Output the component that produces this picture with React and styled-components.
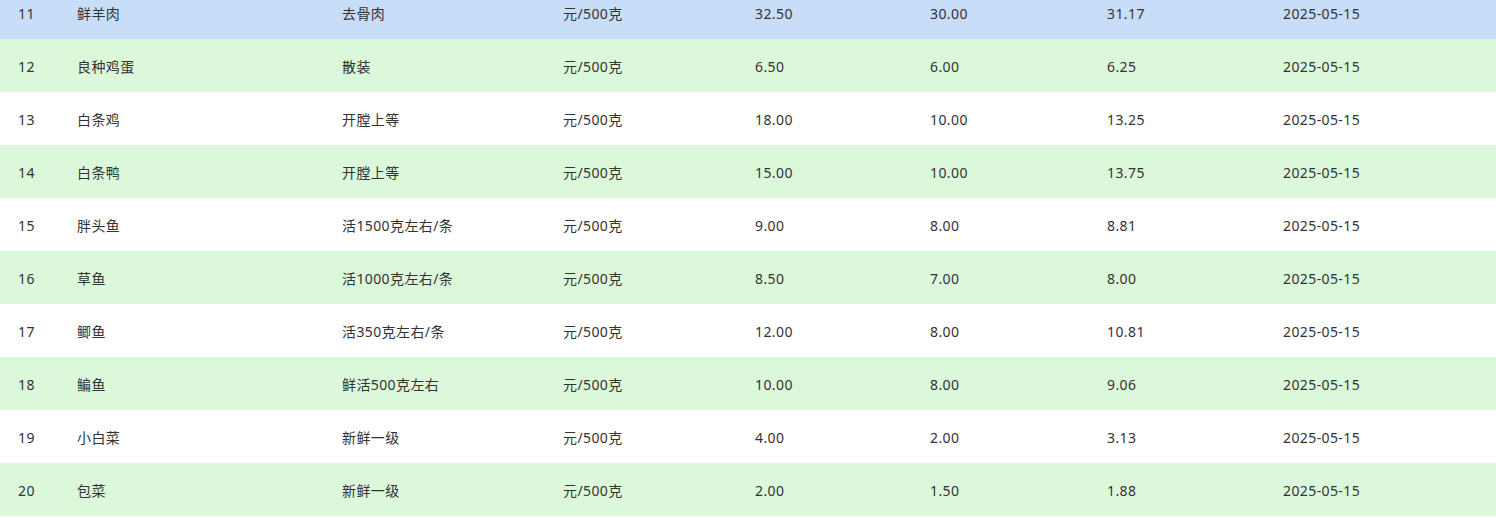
import styled, { createGlobalStyle } from "styled-components";

const GlobalStyle = createGlobalStyle`
  html, body {
    margin: 0;
    padding: 0;
    background: #fff;
  }
  body {
    font-family: "Microsoft YaHei", "Noto Sans", "Noto Sans CJK SC", sans-serif;
  }
`;

const Viewport = styled.div`
  width: 1496px;
  height: 518px;
  overflow: hidden;
`;

const Table = styled.div`
  margin-top: -14px;
  display: flex;
  flex-direction: column;
`;

const Row = styled.div`
  display: grid;
  grid-template-columns: 59px 265px 221px 192px 175px 177px 176px 1fr;
  align-items: center;
  height: 53px;
  padding-left: 18px;
  background: ${(p) =>
    p.$active ? "#c8ddf8" : p.$striped ? "#dbf8db" : "#ffffff"};
`;

const Cell = styled.div`
  font-size: 14px;
  letter-spacing: 0.4px;
  color: #333;
  white-space: nowrap;
  padding-top: 1px;
`;

const rows = [
  [11, "鲜羊肉", "去骨肉", "32.50", "30.00", "31.17"],
  [12, "良种鸡蛋", "散装", "6.50", "6.00", "6.25"],
  [13, "白条鸡", "开膛上等", "18.00", "10.00", "13.25"],
  [14, "白条鸭", "开膛上等", "15.00", "10.00", "13.75"],
  [15, "胖头鱼", "活1500克左右/条", "9.00", "8.00", "8.81"],
  [16, "草鱼", "活1000克左右/条", "8.50", "7.00", "8.00"],
  [17, "鲫鱼", "活350克左右/条", "12.00", "8.00", "10.81"],
  [18, "鳊鱼", "鲜活500克左右", "10.00", "8.00", "9.06"],
  [19, "小白菜", "新鲜一级", "4.00", "2.00", "3.13"],
  [20, "包菜", "新鲜一级", "2.00", "1.50", "1.88"],
];

export default function App() {
  return (
    <>
      <GlobalStyle />
      <Viewport>
        <Table>
          {rows.map(([id, name, spec, hi, lo, avg], i) => (
            <Row key={id} $active={i === 0} $striped={i % 2 === 1}>
              <Cell>{id}</Cell>
              <Cell>{name}</Cell>
              <Cell>{spec}</Cell>
              <Cell>元/500克</Cell>
              <Cell>{hi}</Cell>
              <Cell>{lo}</Cell>
              <Cell>{avg}</Cell>
              <Cell>2025-05-15</Cell>
            </Row>
          ))}
        </Table>
      </Viewport>
    </>
  );
}
